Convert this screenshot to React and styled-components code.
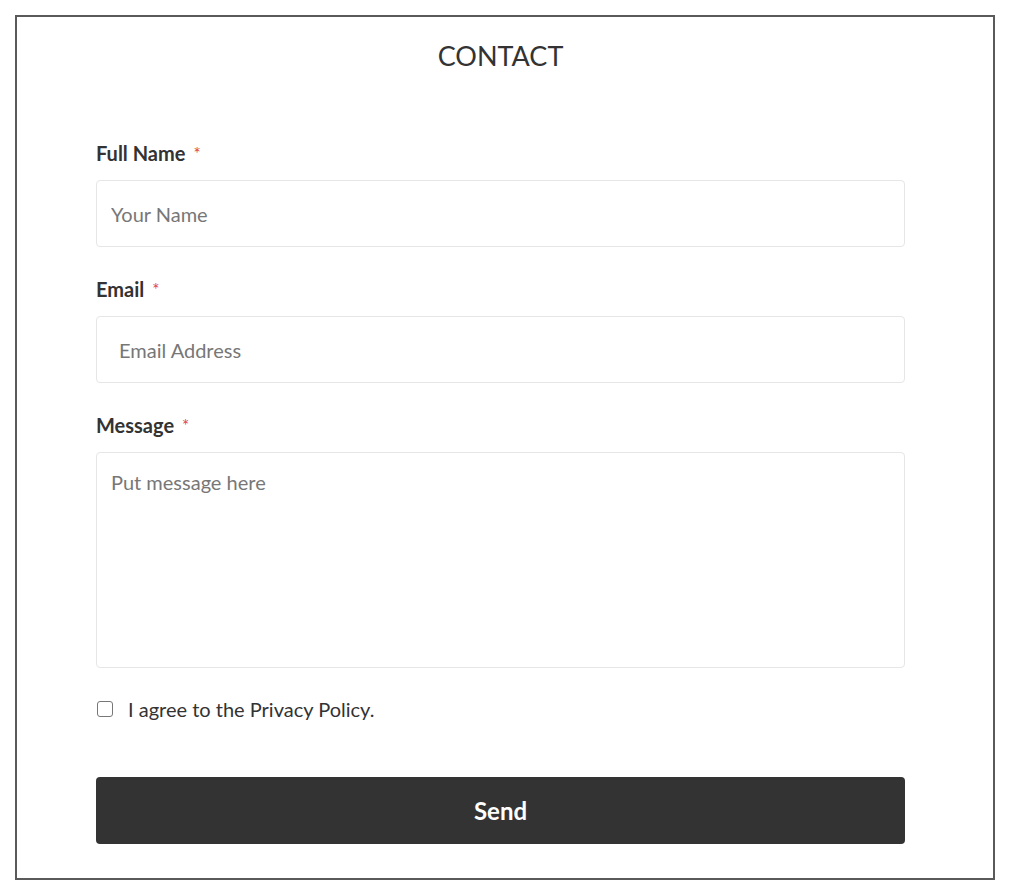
import React from 'react';
import styled, { createGlobalStyle } from 'styled-components';

const GlobalStyle = createGlobalStyle`
  body {
    margin: 0;
    background: #ffffff;
    font-family: Lato, "Open Sans", sans-serif;
  }
`;

const Frame = styled.div`
  box-sizing: border-box;
  width: 980px;
  margin: 15px 0 0 15px;
  border: 2px solid #5a5a5a;
  padding: 24px 88px 34px 79px;
  display: flex;
  flex-direction: column;
  color: #333333;
`;

const Title = styled.h1`
  margin: 0 0 71px;
  text-align: center;
  font-size: 27px;
  font-weight: 400;
  line-height: 30px;
  color: #333333;
`;

const Form = styled.form`
  display: flex;
  flex-direction: column;
`;

const Label = styled.label`
  font-size: 20px;
  font-weight: 700;
  line-height: 22px;
  margin-bottom: 16px;
  color: #333333;
`;

const Star = styled.span`
  color: #e04545;
  font-weight: 400;
  font-size: 17px;
  margin-left: 8px;
  vertical-align: top;
  position: relative;
  top: 1px;
`;

const Input = styled.input`
  box-sizing: border-box;
  width: 100%;
  height: 67px;
  border: 1px solid #e6e6e6;
  border-radius: 4px;
  padding: 0 ${p => p.$pad || 14}px;
  font-family: inherit;
  font-size: 20px;
  color: #333;
  margin-bottom: 31px;
  outline: none;
  &::placeholder {
    color: #777777;
  }
`;

const TextArea = styled.textarea`
  box-sizing: border-box;
  width: 100%;
  height: 216px;
  border: 1px solid #e6e6e6;
  border-radius: 4px;
  padding: 16px 14px;
  font-family: inherit;
  font-size: 20px;
  line-height: 26px;
  resize: none;
  outline: none;
  &::placeholder {
    color: #777777;
  }
`;

const CheckRow = styled.label`
  display: flex;
  align-items: center;
  gap: 15px;
  margin: 30px 0 57px;
  font-size: 20px;
  line-height: 22px;
  color: #333333;
`;

const Box = styled.span`
  box-sizing: border-box;
  width: 16px;
  height: 16px;
  border: 1.5px solid #777777;
  border-radius: 3px;
  margin-left: 1px;
  background: #fff;
`;

const SendButton = styled.button`
  height: 67px;
  width: 100%;
  border: none;
  border-radius: 4px;
  background: #333333;
  color: #ffffff;
  font-family: inherit;
  font-size: 24px;
  font-weight: 700;
  cursor: pointer;
`;

const App = () => {
  return (
    <>
      <GlobalStyle />
      <Frame>
        <Title>CONTACT</Title>
        <Form onSubmit={e => e.preventDefault()}>
          <Label>Full Name<Star>*</Star></Label>
          <Input placeholder="Your Name" />
          <Label>Email<Star>*</Star></Label>
          <Input $pad={22} placeholder="Email Address" />
          <Label>Message<Star>*</Star></Label>
          <TextArea placeholder="Put message here" />
          <CheckRow><Box />I agree to the Privacy Policy.</CheckRow>
          <SendButton type="submit">Send</SendButton>
        </Form>
      </Frame>
    </>
  );
};

export default App;
